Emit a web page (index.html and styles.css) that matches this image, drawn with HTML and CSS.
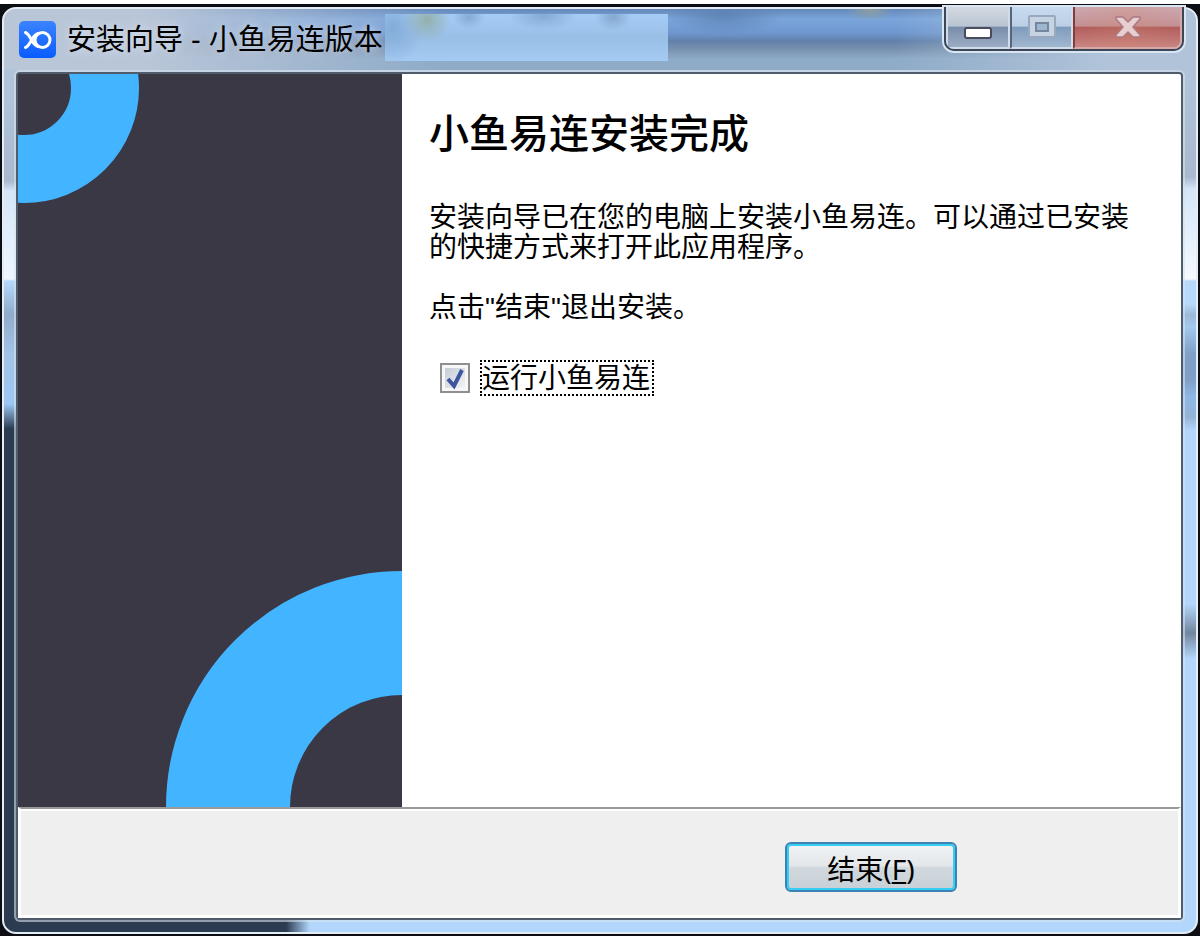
FILE: index.html
```html
<!DOCTYPE html>
<html lang="zh-CN">
<head>
<meta charset="utf-8">
<meta name="viewport" content="width=device-width, initial-scale=1">
<title>安装向导 - 小鱼易连版本</title>
<link rel="stylesheet" href="styles.css">
</head>
<body>
<div class="window">
  <header class="titlebar">
    <svg class="app-icon" viewBox="0 0 37 37" aria-hidden="true">
      <defs>
        <linearGradient id="iconFill" x1="0" y1="0" x2="0" y2="1">
          <stop offset="0" stop-color="#3b83ff"/>
          <stop offset="1" stop-color="#0a5cff"/>
        </linearGradient>
      </defs>
      <rect width="37" height="37" rx="5" fill="url(#iconFill)"/>
      <g fill="none" stroke="#fff" stroke-width="3" stroke-linecap="round" stroke-linejoin="round">
        <circle cx="23.500" cy="19" r="7.500"/>
        <path d="M6.500 11.500Q9 12.500 12 18Q15 24 19 25.500"/>
        <path d="M6.500 26.500Q9 25.500 12 20Q15 14 19 12.500"/>
      </g>
    </svg>
    <span class="title">安装向导 - 小鱼易连版本</span>
    <span class="title-cover"></span>
    <div class="caption">
      <button class="cap cap-min" type="button" aria-label="最小化">
        <svg width="28" height="12" viewBox="0 0 28 12"><rect x="1" y="1" width="26" height="10" rx="2" fill="#fff" stroke="#4a4b5c" stroke-width="2"/></svg>
      </button>
      <button class="cap cap-max" type="button" aria-label="最大化" disabled>
        <svg width="28" height="24" viewBox="0 0 28 24"><rect x="1" y="1" width="26" height="21" rx="1" fill="#c6d3e2" stroke="#98a8be" stroke-width="2"/><rect x="8" y="8" width="12" height="8" fill="#9fb6d0" stroke="#75869e" stroke-width="2"/></svg>
      </button>
      <button class="cap cap-close" type="button" aria-label="关闭" disabled>
        <svg width="26" height="22" viewBox="0 0 26 22"><path d="M1 1H8L13 6L18 1H25V3L18 11L25 19V21H18L13 16L8 21H1V19L8 11L1 3Z" fill="#e8cdd1" stroke="#a87b80" stroke-width="1.500"/></svg>
      </button>
    </div>
  </header>
  <main class="client">
    <div class="page">
      <aside class="banner">
        <svg class="ring-top" viewBox="0 0 122 130" aria-hidden="true"><circle cx="6" cy="14" r="81" fill="none" stroke="#43b4ff" stroke-width="68"/></svg>
        <svg class="ring-bottom" viewBox="0 0 236 236" aria-hidden="true"><circle cx="236" cy="236" r="174" fill="none" stroke="#43b4ff" stroke-width="124"/></svg>
      </aside>
      <section class="content">
        <h1>小鱼易连安装完成</h1>
        <p>安装向导已在您的电脑上安装小鱼易连。可以通过已安装的快捷方式来打开此应用程序。</p>
        <p>点击"结束"退出安装。</p>
        <label class="run" for="run">
          <span class="check">
            <input id="run" type="checkbox" checked>
            <svg class="tick" viewBox="0 0 30 30" aria-hidden="true"><path d="M8 16L14 23L22 7" fill="none" stroke="#3d569d" stroke-width="4"/></svg>
          </span>
          <span class="run-text">运行小鱼易连</span>
        </label>
      </section>
    </div>
    <footer class="footer">
      <button class="finish" type="button">结束(<u>F</u>)</button>
    </footer>
  </main>
</div>
</body>
</html>
```

FILE: styles.css
```css
* {
  box-sizing: border-box;
}

body {
  margin: 0;
  min-height: 100vh;
  display: flex;
  padding: 3px 2px 2px;
  border-top: 4px solid #fff;
  background: #0c0e14;
  color: #000;
  font-family: "Liberation Sans", "Noto Sans CJK SC", sans-serif;
  font-size: 28px;
  line-height: 30px;
}

.window {
  flex: 1;
  min-width: 0;
  display: flex;
  flex-direction: column;
  padding: 0 11px 11px 10px;
  border: 2px solid #e4edf6;
  border-radius: 14px;
  background:
    linear-gradient(#b0c3d9 90px, #a9b9ce 172px, #d5e6f8 182px, #eef6ff 270px, #b7d9fb 272px, #8fabc9 305px, #a3c4e6 345px, #9cc6f2 395px, #2b3b50 420px, #2b3b50) left / 12px 100% no-repeat,
    linear-gradient(#b0c3d9 70px, #a9b9ce 168px, #d5e6f8 180px, #f4f9ff 270px, #b7d9fb 272px, #b7d9fb 295px, #9bb8d6 306px, #a3c9ee 318px, #7f9fc6 345px, #7f9fc6 370px, #8eb8e6 388px, #94b3d6 408px, #b3d7fc 422px, #b3d7fc 595px, #72869f 624px, #b3d7fc 650px, #b3d7fc) right / 13px 100% no-repeat,
    linear-gradient(90deg, #2b3b50 282px, #b3d7fc 306px) bottom / 100% 13px no-repeat,
    #b0c3d9;
}

.titlebar {
  display: flex;
  align-items: center;
  height: 61px;
  margin: 0 -11px 0 -10px;
  padding: 0 12px 0 15px;
  border-radius: 12px 12px 0 0;
  background:
    radial-gradient(ellipse 24px 12px at 866px 0, #8f9f9d, transparent),
    radial-gradient(ellipse 60px 22px at 720px 4px, #5f83b4, transparent),
    linear-gradient(90deg, #b9c6d8 0, #b9c6d8 140px, transparent 440px, transparent 890px, #b0c3d9 1100px),
    linear-gradient(#6488b8 0, #7aa5db 10px, #6e97cf 24px, #6180aa 32px, #7890ae 40px, #8eabc8 50px, #8eabc8);
}

.app-icon {
  flex: none;
  width: 37px;
  height: 37px;
  margin-right: 11px;
}

.title {
  flex: none;
  font-size: 29px;
  white-space: nowrap;
  text-shadow: 0 0 8px #dfe8f3;
}

.title-cover {
  flex: 0 1 283px;
  height: 47px;
  margin: 0 0 4px 2px;
  background:
    radial-gradient(ellipse 24px 22px at 42px 6px, #93b0ac, transparent),
    radial-gradient(ellipse 16px 12px at 84px 3px, #84abd5, transparent),
    radial-gradient(ellipse 34px 14px at 158px 2px, #84abd5, transparent),
    radial-gradient(ellipse 18px 14px at 228px 3px, #84a8cf, transparent),
    radial-gradient(ellipse 30px 36px at 8px 14px, #83acd9, transparent),
    linear-gradient(#a5ccf5, #9abfe7 50%, #a4cbf2);
}

.caption {
  display: flex;
  flex: none;
  align-self: flex-start;
  width: 240px;
  height: 44px;
  margin: -2px 0 0 auto;
  border: 2px solid #3c4657;
  border-top: 0;
  border-radius: 0 0 10px 10px;
  box-shadow: 0 0 0 2px #d8e6f4;
  overflow: hidden;
}

.cap {
  display: flex;
  align-items: center;
  justify-content: center;
  padding: 0;
  border: 2px solid #d0dcea;
  border-top: 0;
}

.cap-min {
  width: 64px;
  padding-top: 11px;
  background: linear-gradient(#d3d9e1, #b9c4d2 48%, #788dab 50%, #9cadc4);
}

.cap-max {
  width: 63px;
  border-left: 2px solid #56657c;
  background: linear-gradient(#c6daf0, #bccfe5 48%, #7f9bbc 50%, #a1b7d0);
}

.cap-close {
  flex: 1;
  border-color: #d7a7a6;
  border-left: 2px solid #853b37;
  border-radius: 0 0 8px 0;
  background: linear-gradient(90deg, transparent, #d9876840 50%, transparent), linear-gradient(#cba9b2, #c39094 48%, #b05c5c 50%, #c88582);
}

.client {
  flex: 1;
  display: flex;
  flex-direction: column;
  border: 2px solid #4f5c6c;
  border-radius: 4px;
  box-shadow: 0 0 0 2px #d5e3f099;
  margin: 2px 2px 1px;
  background: #fff;
}

.page {
  flex: 1;
  display: flex;
}

.banner {
  position: relative;
  flex: none;
  width: 384px;
  background: #3a3845;
}

.ring-top,
.ring-bottom {
  position: absolute;
}

.ring-top {
  top: 0;
  left: 0;
  width: 122px;
}

.ring-bottom {
  right: 0;
  bottom: 0;
  width: 236px;
}

.content {
  flex: 1;
  min-width: 0;
  padding: 36px 48px 36px 27px;
}

h1 {
  margin: 0 0 45px;
  font-size: 40px;
  line-height: 48px;
  font-weight: 500;
}

p {
  margin: 0 0 30px;
}

.run {
  display: inline-flex;
  align-items: center;
  gap: 10px;
  margin: 7px 0 0 11px;
}

.check {
  position: relative;
  display: flex;
}

.check input {
  appearance: none;
  width: 30px;
  height: 30px;
  margin: 0;
  border: 2px solid #8e8f8f;
  background: linear-gradient(135deg, #c5ccd5, #f2f4f6) center / 20px 20px no-repeat #f7f7f7;
}

.tick {
  position: absolute;
  inset: 0;
  visibility: hidden;
  pointer-events: none;
}

.check input:checked + .tick {
  visibility: visible;
}

.run-text {
  border: 2px dotted #000;
  padding: 2px 2px 0 0;
}

.footer {
  display: flex;
  justify-content: flex-end;
  height: 111px;
  padding: 33px 221px 0 0;
  border: 3px solid #fff;
  border-top: 2px solid #999;
  background: #efefef;
  box-shadow: inset 0 2px #fff;
}

.finish {
  width: 172px;
  height: 50px;
  padding: 4px 0 0;
  border: 2px solid #3c83b4;
  border-radius: 6px;
  background: linear-gradient(#f1f3f5, #e3e7ea 48%, #d2d9de 50%, #c6d0d6);
  box-shadow: inset 0 0 0 2px #36cdf3;
  color: #000;
  font-family: "Noto Sans", "Noto Sans CJK SC", sans-serif;
  font-size: 28px;
  line-height: 30px;
}
```
